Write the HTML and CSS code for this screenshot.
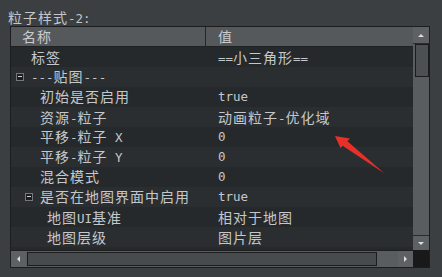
FILE: index.html
```html
<!DOCTYPE html>
<html>
<head>
<meta charset="utf-8">
<link rel="stylesheet" href="styles.css">
</head>
<body>
<div class="panel">
  <div class="title"><span class="h">粒子样式</span>-2:</div>
  <div class="frame">
    <div class="viewport">
      <div class="head">
        <div class="hcell hname"><span class="h">名称</span></div>
        <div class="hcell"><span class="h">值</span></div>
      </div>
      <div class="row odd"><div class="name l0"><span class="exp"></span><span class="lbl"><span class="h">标签</span></span></div><div class="val">==<span class="h">小三角形</span>==</div></div>
      <div class="row even"><div class="name l0"><span class="exp box"></span><span class="lbl">---<span class="h">贴图</span>---</span></div><div class="val"></div></div>
      <div class="row odd"><div class="name l1"><span class="exp"></span><span class="lbl"><span class="h">初始是否启用</span></span></div><div class="val">true</div></div>
      <div class="row even"><div class="name l1"><span class="exp"></span><span class="lbl"><span class="h">资源</span>-<span class="h">粒子</span></span></div><div class="val"><span class="h">动画粒子</span>-<span class="h">优化域</span></div></div>
      <div class="row odd"><div class="name l1"><span class="exp"></span><span class="lbl"><span class="h">平移</span>-<span class="h">粒子</span> X</span></div><div class="val">0</div></div>
      <div class="row even"><div class="name l1"><span class="exp"></span><span class="lbl"><span class="h">平移</span>-<span class="h">粒子</span> Y</span></div><div class="val">0</div></div>
      <div class="row odd"><div class="name l1"><span class="exp"></span><span class="lbl"><span class="h">混合模式</span></span></div><div class="val">0</div></div>
      <div class="row even"><div class="name l1"><span class="exp box"></span><span class="lbl"><span class="h">是否在地图界面中启用</span></span></div><div class="val">true</div></div>
      <div class="row odd"><div class="name l2"><span class="exp"></span><span class="lbl"><span class="h">地图</span>UI<span class="h">基准</span></span></div><div class="val"><span class="h">相对于地图</span></div></div>
      <div class="row even"><div class="name l2"><span class="exp"></span><span class="lbl"><span class="h">地图层级</span></span></div><div class="val"><span class="h">图片层</span></div></div>
    </div>
    <div class="vscroll">
      <div class="btn up"><span class="tri tri-up"></span></div>
      <div class="vthumb"></div>
      <div class="vtrack"></div>
      <div class="btn down"><span class="tri tri-down"></span></div>
    </div>
    <div class="hscroll">
      <div class="btn left"><span class="tri tri-left"></span></div>
      <div class="hthumb"></div>
      <div class="htrack"></div>
      <div class="btn right"><span class="tri tri-right"></span></div>
    </div>
    <div class="corner"></div>
  </div>
  <svg class="arrow" width="442" height="277" viewBox="0 0 442 277">
    <polygon points="335,136 350,138.5 340.5,148" fill="#e8302a"/>
    <polygon points="346,140 384.5,173.5 341.5,145" fill="#e8302a"/>
  </svg>
</div>
</body>
</html>
```

FILE: styles.css
```css
* { box-sizing: border-box; }
html, body { margin: 0; height: 100%; }
body {
  background: #3c3f41;
  font-family: "DejaVu Sans Mono", monospace;
  font-size: 12.5px;
  color: #c5c8cb;
  overflow: hidden;
}
.panel { position: relative; height: 277px; }
.h {
  font-family: "Noto Sans CJK SC", "Noto Sans CJK JP", sans-serif;
  font-size: 14px;
  letter-spacing: 1px;
}
.title {
  height: 26px;
  padding: 8px 0 0 8px;
  line-height: 18px;
  color: #c3c6c9;
  white-space: nowrap;
}
.frame {
  margin-left: 10px;
  width: 420px;
  height: 242px;
  border: 1px solid #1c1d1f;
  display: grid;
  grid-template-columns: 1fr 16px;
  grid-template-rows: 1fr 17px;
}
.viewport { background: #26292b; overflow: hidden; }
.head {
  display: grid;
  grid-template-columns: 195px 1fr;
  height: 20px;
  background: #56595c;
  border-bottom: 1px solid #1f2123;
  color: #c9ccce;
}
.hcell { line-height: 19px; padding-left: 11px; white-space: nowrap; }
.hname { border-right: 1px solid #232527; }
.hcell + .hcell { padding-left: 12px; }
.row {
  display: grid;
  grid-template-columns: 195px 1fr;
  height: 20px;
  line-height: 20px;
  white-space: nowrap;
}
.even { background: #2b2e30; }
.odd { background: #26292b; }
.name { display: flex; align-items: center; gap: 7px; overflow: hidden; }
.lbl { white-space: nowrap; }
.l0 { padding-left: 5px; }
.l1 { padding-left: 14px; }
.l2 { padding-left: 21px; }
.exp { width: 8px; height: 8px; flex: none; }
.exp.box {
  border: 1px solid #75787a;
  background: #1c1d1f;
  position: relative;
}
.exp.box::after {
  content: "";
  position: absolute;
  left: 1px;
  width: 4px;
  top: 2px;
  height: 1px;
  background: #d0d0d0;
}
.val { padding-left: 12px; }
.vscroll {
  display: flex;
  flex-direction: column;
  background: #595d60;
}
.btn {
  background: #5d6164;
  display: flex;
  align-items: center;
  justify-content: center;
  flex: none;
}
.up { height: 17px; border-bottom: 1px solid #2a2c2e; }
.down { height: 15px; border-top: 1px solid #2a2c2e; }
.vthumb {
  margin-left: 2px;
  height: 33px;
  border: 1px solid #1b1c1e;
  background: #4c5053;
  flex: none;
}
.vtrack { flex: 1; }
.hscroll {
  display: flex;
  background: #595d60;
  border-top: 1px solid #1e1f21;
}
.left, .right { width: 15px; }
.hthumb {
  margin: 1px 0 1px 1px;
  width: 350px;
  border: 1px solid #1b1c1e;
  background: #474b4e;
  flex: none;
}
.htrack { flex: 1; }
.corner { background: #19191a; }
.tri { width: 0; height: 0; }
.tri-up { border-left: 3px solid transparent; border-right: 3px solid transparent; border-bottom: 3px solid #dcdcdc; }
.tri-down { border-left: 3px solid transparent; border-right: 3px solid transparent; border-top: 3px solid #dcdcdc; }
.tri-left { border-top: 3px solid transparent; border-bottom: 3px solid transparent; border-right: 3px solid #dcdcdc; }
.tri-right { border-top: 3px solid transparent; border-bottom: 3px solid transparent; border-left: 3px solid #dcdcdc; }
.arrow { position: absolute; left: 0; top: 0; pointer-events: none; }
```
